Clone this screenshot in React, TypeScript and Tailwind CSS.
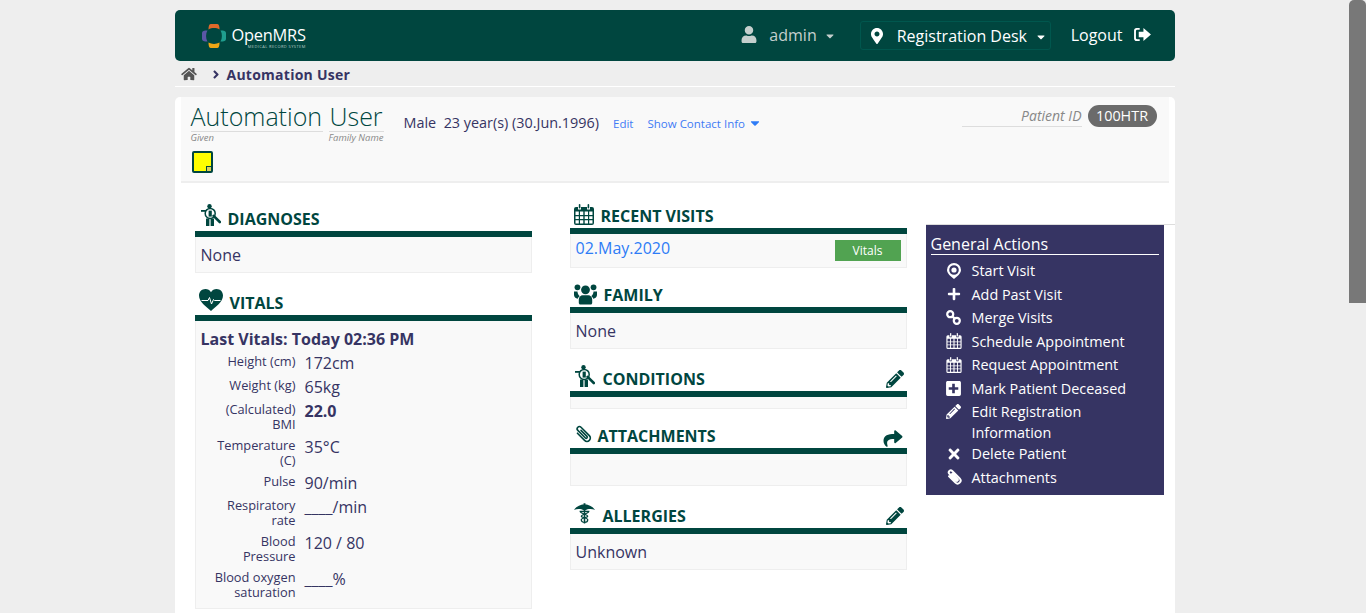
import React from 'react';
import {
  FaUser,
  FaMapMarkerAlt,
  FaHome,
  FaAngleRight,
  FaShare,
  FaPencilAlt,
  FaPlus,
  FaPlusSquare,
  FaTimes,
  FaCaretDown,
} from 'react-icons/fa';

const Torso = ({ className }: { className?: string }) => (
  <svg viewBox="0 0 20 22" className={className} fill="currentColor">
    <circle cx="8.5" cy="2.2" r="2.2" />
    <path d="M0 6 H5 V7.8 H0Z" />
    <circle cx="9.2" cy="9.4" r="5" fill="#fff" stroke="currentColor" strokeWidth="1.5" />
    <path d="M7.6 6.6 H10.8 V12.6 H7.6Z" />
    <path d="M12.6 11.8 L18.8 18" fill="none" stroke="currentColor" strokeWidth="2.6" strokeLinecap="round" />
    <path d="M5 14.6 H8.4 V22 H5Z M9.6 14.6 H13 V22 H9.6Z" />
  </svg>
);

const Caduceus = ({ className }: { className?: string }) => (
  <svg viewBox="0 0 22 22" className={className} fill="currentColor">
    <path d="M0 7.6 C3 3.4 7.5 2 10 2 V.8 H12 V2 C14.5 2 19 3.4 22 7.6 C18 6.2 14 6.6 12 8.2 H10 C8 6.6 4 6.2 0 7.6Z" />
    <rect x="10.2" y="7" width="1.6" height="15" />
    <path d="M6.5 9.4 H15.5 C15.5 11.6 7.6 12.4 7.6 14.4 C7.6 16 14.4 16 14.4 18 C14.4 19.8 12.6 20.8 11 20.8 C9.4 20.8 7.6 19.8 7.6 18 C7.6 16 14.4 16 14.4 14.4 C14.4 12.4 6.5 11.6 6.5 9.4Z" fill="none" stroke="currentColor" strokeWidth="1.3" />
  </svg>
);

const HeartPulse = ({ className }: { className?: string }) => (
  <svg viewBox="0 0 24 22" className={className}>
    <path d="M12 22 C7 17.5 0 13 0 6.6 C0 2.8 2.8 0 6.4 0 C8.8 0 10.8 1.2 12 3.2 C13.2 1.2 15.2 0 17.6 0 C21.2 0 24 2.8 24 6.6 C24 13 17 17.5 12 22Z" fill="currentColor" />
    <path d="M2.5 11.5 H9 L10.5 8.5 L12.5 15 L14.5 10.5 L15.5 11.5 H21.5" fill="none" stroke="#fff" strokeWidth="1" />
  </svg>
);

const People = ({ className }: { className?: string }) => (
  <svg viewBox="0 0 24 22" className={className} fill="currentColor">
    <circle cx="3.6" cy="4" r="3" />
    <circle cx="20.4" cy="4" r="3" />
    <circle cx="12" cy="6.6" r="4.6" />
    <path d="M0 8.4 H3.6 C3.8 10.6 4.6 12.2 6 13.4 C5 14 4.2 15 4 16 C1.6 15.4 0 14 0 12Z" />
    <path d="M24 8.4 H20.4 C20.2 10.6 19.4 12.2 18 13.4 C19 14 19.8 15 20 16 C22.4 15.4 24 14 24 12Z" />
    <path d="M5 17 C5 14.2 7 12.4 9 12.4 H15 C17 12.4 19 14.2 19 17 V20 C19 21.2 18 22 17 22 H7 C6 22 5 21.2 5 20Z" />
  </svg>
);

const CalendarGrid = ({ className }: { className?: string }) => (
  <svg viewBox="0 0 20 21" className={className} fill="currentColor">
    <path d="M2 3 H4 V5.5 H7 V3 H13 V5.5 H16 V3 H18 A2 2 0 0 1 20 5 V19 A2 2 0 0 1 18 21 H2 A2 2 0 0 1 0 19 V5 A2 2 0 0 1 2 3Z M1.5 7.5 V11 H4.8 V7.5Z M6 7.5 V11 H9.3 V7.5Z M10.7 7.5 V11 H14 V7.5Z M15.2 7.5 V11 H18.5 V7.5Z M1.5 12.2 V15 H4.8 V12.2Z M6 12.2 V15 H9.3 V12.2Z M10.7 12.2 V15 H14 V12.2Z M15.2 12.2 V15 H18.5 V12.2Z M1.5 16.2 V19.5 H4.8 V16.2Z M6 16.2 V19.5 H9.3 V16.2Z M10.7 16.2 V19.5 H14 V16.2Z M15.2 16.2 V19.5 H18.5 V16.2Z" fillRule="evenodd" />
    <rect x="4.8" y="0" width="1.6" height="4.6" rx=".8" />
    <rect x="13.6" y="0" width="1.6" height="4.6" rx=".8" />
  </svg>
);

const PinRing = ({ className }: { className?: string }) => (
  <svg viewBox="0 0 14 16" className={className} fill="currentColor">
    <path
      fillRule="evenodd"
      d="M7 0 A7 7 0 0 1 14 7 C14 10.5 10 13.5 7 16 C4 13.5 0 10.5 0 7 A7 7 0 0 1 7 0Z M7 2.2 A4.8 4.8 0 1 0 7 11.8 A4.8 4.8 0 1 0 7 2.2Z"
    />
    <circle cx="7" cy="7" r="2.6" />
  </svg>
);

const MergeLink = ({ className }: { className?: string }) => (
  <svg viewBox="0 0 16 16" className={className} fill="none" stroke="currentColor" strokeWidth="2.4">
    <circle cx="4.5" cy="4.5" r="3.2" />
    <circle cx="11.5" cy="11.5" r="3.2" />
    <path d="M6.5 6.5 L9.5 9.5" />
  </svg>
);

const Clip = ({ className, weight = 1.4 }: { className?: string; weight?: number }) => (
  <svg viewBox="0 0 16 16" className={className} fill="none" stroke="currentColor" strokeWidth={weight} strokeLinecap="round">
    <path transform="rotate(-45 8 8)" d="M5 4 V13 A3 3 0 0 0 11 13 V2.5 A2 2 0 0 0 7 2.5 V12 A1 1 0 0 0 9 12 V4.5" />
  </svg>
);

const SignOut = ({ className }: { className?: string }) => (
  <svg viewBox="0 0 18 16" className={className} fill="currentColor">
    <path d="M6 1 H3.2 A3 3 0 0 0 0 4 V12 A3 3 0 0 0 3.2 15 H6 V13 H3.4 A1.4 1.4 0 0 1 2 11.6 V4.4 A1.4 1.4 0 0 1 3.4 3 H6Z" />
    <path d="M10 1 L18 8 L10 15 V11 H5 V5 H10Z" />
  </svg>
);

const Logo = () => (
  <svg viewBox="0 0 26 26" className="w-[26px] h-[26px] shrink-0">
    <path d="M7.5 6.5 C7.5 3 8 1 10 1 H16 C18 1 18.5 3 18.5 6.5 C15.5 4.6 10.5 4.6 7.5 6.5Z" fill="#e0692a" />
    <path d="M19.5 7.5 C23 7.5 25 8 25 10 V16 C25 18 23 18.5 19.5 18.5 C21.4 15.5 21.4 10.5 19.5 7.5Z" fill="#1f9e8f" />
    <path d="M7.5 19.5 C10.5 21.4 15.5 21.4 18.5 19.5 C18.5 23 18 25 16 25 H10 C8 25 7.5 23 7.5 19.5Z" fill="#eea616" />
    <path d="M6.5 7.5 C4.6 10.5 4.6 15.5 6.5 18.5 C3 18.5 1 18 1 16 V10 C1 8 3 7.5 6.5 7.5Z" fill="#5b57a6" />
  </svg>
);

const Section = ({
  icon,
  title,
  action,
  height,
  gap = 'gap-2',
  children,
}: {
  icon: React.ReactNode;
  title: string;
  action?: React.ReactNode;
  height: string;
  gap?: string;
  children?: React.ReactNode;
}) => (
  <section>
    <div className={`flex items-end justify-between pl-[5px] pr-[3px] ${height}`}>
      <div className={`flex items-end ${gap}`}>
        {icon}
        <h3 className="text-[16px] leading-[22px] font-bold uppercase text-[#00463f] mb-[1px]">{title}</h3>
      </div>
      {action}
    </div>
    <div className="h-[6px] bg-[#00463f]" />
    <div className="bg-[#f9f9f9] border border-t-0 border-[#eeeeee] px-[5px]">{children}</div>
  </section>
);

const vitals: [string, React.ReactNode][] = [
  ['Height (cm)', '172cm'],
  ['Weight (kg)', '65kg'],
  ['(Calculated) BMI', <b key="bmi" className="font-bold">22.0</b>],
  ['Temperature (C)', '35°C'],
  ['Pulse', '90/min'],
  ['Respiratory rate', '____/min'],
  ['Blood Pressure', '120 / 80'],
  ['Blood oxygen saturation', '____%'],
];

const iconCls = 'w-[16px] h-[16px] shrink-0';
const actions: [React.ReactNode, string][] = [
  [<PinRing key="a" className="w-[14px] h-[16px] shrink-0" />, 'Start Visit'],
  [<FaPlus key="b" className="w-[14px] h-[14px] shrink-0" />, 'Add Past Visit'],
  [<MergeLink key="c" className="w-[15px] h-[15px] shrink-0" />, 'Merge Visits'],
  [<CalendarGrid key="d" className={iconCls} />, 'Schedule Appointment'],
  [<CalendarGrid key="e" className={iconCls} />, 'Request Appointment'],
  [<FaPlusSquare key="f" className="w-[17px] h-[17px] shrink-0" />, 'Mark Patient Deceased'],
  [<FaPencilAlt key="g" className="w-[15px] h-[15px] shrink-0" />, 'Edit Registration Information'],
  [<FaTimes key="h" className="w-[16px] h-[16px] shrink-0" />, 'Delete Patient'],
  [<Clip key="i" weight={2} className="w-[16px] h-[16px] shrink-0" />, 'Attachments'],
];

export default function App() {
  return (
    <div className="h-[613px] overflow-hidden flex bg-[#eeeeee] text-[#363463] font-['Open_Sans',sans-serif]">
      <main className="flex-1 min-w-0 pt-[10px]">
        <div className="w-[1000px] mx-auto">
          {/* top bar */}
          <header className="h-[51px] bg-[#00463f] rounded-[5px] flex items-center pl-[26px] pr-[24px]">
            <Logo />
            <div className="ml-[5px] flex flex-col items-end text-white">
              <span className="text-[16.4px] leading-[18px] tracking-[-0.25px] mt-[3px]">OpenMRS</span>
              <span className="text-[4px] leading-[5px] text-[#b8cbc8] tracking-[0.4px] whitespace-nowrap">MEDICAL RECORD SYSTEM</span>
            </div>
            <div className="ml-auto flex items-center text-[#c4cfcd] text-[16px] -mt-[2px]">
              <FaUser className="w-[16px] h-[17px]" />
              <span className="ml-[12px]">admin</span>
              <FaCaretDown className="ml-[7px] w-[12px] h-[12px] mt-[3px]" />
            </div>
            <div className="ml-[24px] h-[29px] w-[191px] border border-[#00574e] rounded-[3px] flex items-center pl-[10px] text-white text-[16px]">
              <FaMapMarkerAlt className="w-[12px] h-[16px]" />
              <span className="ml-[14px]">Registration Desk</span>
              <FaCaretDown className="ml-[8px] w-[12px] h-[12px] mt-[3px]" />
            </div>
            <div className="ml-[20px] flex items-center text-white text-[16px] -mt-[1px]">
              <span>Logout</span>
              <SignOut className="ml-[11px] w-[17px] h-[15px] -mt-[2px]" />
            </div>
          </header>

          {/* breadcrumb */}
          <nav className="h-[26px] border-b border-white flex items-center pl-[6px] pt-[1px] text-[#363463]">
            <FaHome className="w-[16px] h-[14px] text-[#555555] -mt-[1px]" />
            <FaAngleRight className="ml-[14px] w-[10px] h-[13px]" />
            <span className="ml-[6px] text-[14px] font-bold tracking-[0.25px]">Automation User</span>
          </nav>

          <div className="mt-[10px] bg-white rounded-t-[5px] h-[520px]">
            {/* patient header */}
            <div className="mx-[6px] h-[86px] bg-[#f9f9f9] border-b-2 border-[#eeeeee] flex pl-[10px] pr-[12px]">
              <div>
                <div className="flex gap-[6px] pt-[5px]">
                  <div>
                    <div className="w-[132px] text-[25px] leading-[29px] font-light border-b border-[#dddddd] text-[#00463f]">Automation</div>
                    <div className="text-[9.5px] leading-[12px] italic text-[#888888]">Given</div>
                  </div>
                  <div>
                    <div className="w-[55px] text-[25px] leading-[29px] font-light border-b border-[#dddddd] text-[#00463f] pl-[1px]">User</div>
                    <div className="text-[9.5px] leading-[12px] italic text-[#888888] whitespace-nowrap">Family Name</div>
                  </div>
                </div>
                <div className="ml-[1px] mt-[7px] w-[21px] h-[22px] bg-[#ffff00] border-2 border-[#00463f] rounded-[2px] relative">
                  <span className="absolute right-0 bottom-0 w-[5px] h-[5px] bg-[#d8d060] border-l border-t border-[#00463f]" />
                </div>
              </div>
              <div className="ml-[20px] pt-[16px] flex items-start text-[14.4px] leading-[20px] whitespace-pre">
                <span>Male  23 year(s) (30.Jun.1996)</span>
                <span className="ml-[14px] text-[11.5px] leading-[22px] text-[#3f7bf5]">Edit</span>
                <span className="ml-[14px] text-[11.5px] leading-[22px] text-[#3f7bf5]">Show Contact Info</span>
                <FaCaretDown className="ml-[3px] mt-[3px] w-[14px] h-[14px] text-[#2e7cf6]" />
              </div>
              <div className="ml-auto flex items-start pt-[8px]">
                <div className="w-[120px] h-[22px] border-b border-[#dddddd] text-right italic text-[14px] leading-[21px] text-[#888888]">Patient ID</div>
                <div className="ml-[6px] w-[69px] h-[22px] rounded-full bg-[#6b6b6b] text-white text-center text-[14.4px] leading-[22px]">100HTR</div>
              </div>
            </div>

            {/* dashboard */}
            <div className="flex items-start">
              <div className="ml-[20px] w-[337px] flex flex-col">
                <Section
                  height="h-[48px]"
                  icon={<Torso className="w-[20px] h-[22px] text-[#00463f] mb-[5px] mr-[-1px] ml-[1px]" />}
                  title="Diagnoses"
                >
                  <div className="h-[35px] text-[16px] leading-[36px]">None</div>
                </Section>
                <div className="mt-[8px]">
                  <Section
                    height="h-[34px]"
                    gap="gap-[7px]"
                    icon={<HeartPulse className="w-[24px] h-[22px] text-[#00463f] mb-[4px] -ml-[1px]" />}
                    title="Vitals"
                  >
                    <div className="text-[16px] leading-[24px] font-bold pt-[6px]">Last Vitals: Today 02:36 PM</div>
                    <div className="pb-[5px]">
                      {vitals.map(([label, value]) => (
                        <div key={label} className="flex">
                          <div className="ml-[6px] w-[89px] shrink-0 text-right text-[12.8px] leading-[15px] py-[3px]">{label}</div>
                          <div className="ml-[9px] text-[16px] leading-[24px]">{value}</div>
                        </div>
                      ))}
                    </div>
                  </Section>
                </div>
              </div>

              <div className="ml-[38px] w-[337px] flex flex-col">
                <Section
                  height="h-[45px]"
                  gap="gap-[7px]"
                  icon={<CalendarGrid className="w-[20px] h-[21px] text-[#00463f] mb-[3px] -ml-[1px]" />}
                  title="Recent Visits"
                >
                  <div className="h-[33px] flex justify-between">
                    <span className="text-[16px] leading-[28px] text-[#2e7cf6]">02.May.2020</span>
                    <span className="mt-[6px] w-[66px] h-[21px] bg-[#51a351] text-white text-center text-[12px] leading-[21px]">Vitals</span>
                  </div>
                </Section>
                <div className="mt-[5px]">
                  <Section
                    height="h-[34px]"
                    gap="gap-[7px]"
                    icon={<People className="w-[23px] h-[22px] text-[#00463f] mb-[2px] -ml-[1px]" />}
                    title="Family"
                  >
                    <div className="h-[35px] text-[16px] leading-[36px]">None</div>
                  </Section>
                </div>
                <div className="mt-[8px]">
                  <Section
                    height="h-[34px]"
                    icon={<Torso className="w-[20px] h-[22px] text-[#00463f] mb-[4px]" />}
                    title="Conditions"
                    action={<FaPencilAlt className="w-[18px] h-[18px] text-[#00463f] mb-[3px]" />}
                  >
                    <div className="h-[11px]" />
                  </Section>
                </div>
                <div className="mt-[5px]">
                  <Section
                    height="h-[34px]"
                    gap="gap-[6px]"
                    icon={<Clip className="w-[18px] h-[18px] text-[#00463f] mb-[5px] -ml-[1px]" />}
                    title="Attachments"
                    action={<FaShare className="w-[22px] h-[19px] text-[#00463f]" />}
                  >
                    <div className="h-[31px]" />
                  </Section>
                </div>
                <div className="mt-[8px]">
                  <Section
                    height="h-[34px]"
                    gap="gap-[8px]"
                    icon={<Caduceus className="w-[21px] h-[22px] text-[#00463f] mb-[4px] -ml-[1px]" />}
                    title="Allergies"
                    action={<FaPencilAlt className="w-[18px] h-[18px] text-[#00463f] mb-[3px]" />}
                  >
                    <div className="h-[35px] text-[16px] leading-[36px]">Unknown</div>
                  </Section>
                </div>
              </div>

              {/* actions */}
              <aside className="ml-[19px] mt-[41px] flex-1 border-t border-[#dddddd]">
                <div className="w-[238px] h-[270px] bg-[#363463] text-white px-[5px]">
                  <h3 className="text-[16px] leading-[22px] pt-[8px] h-[30px] border-b border-white">General Actions</h3>
                  <ul className="pt-[4.2px]">
                    {actions.map(([icon, label]) => (
                      <li key={label} className="flex text-[14.4px] leading-[21px] py-[1.25px] has-[.wrapped]:-mb-[2.5px]">
                        <span className="w-[41px] pl-[16px] pr-[11px] flex items-center justify-center h-[21px] shrink-0">{icon}</span>
                        <span className={label.length > 24 ? 'wrapped w-[170px]' : 'w-[180px]'}>{label}</span>
                      </li>
                    ))}
                  </ul>
                </div>
              </aside>
            </div>
          </div>
        </div>
      </main>
      <div className="w-[17px] shrink-0">
        <div className="h-[303px] bg-[#787878] rounded-t-[5px]" />
      </div>
    </div>
  );
}
